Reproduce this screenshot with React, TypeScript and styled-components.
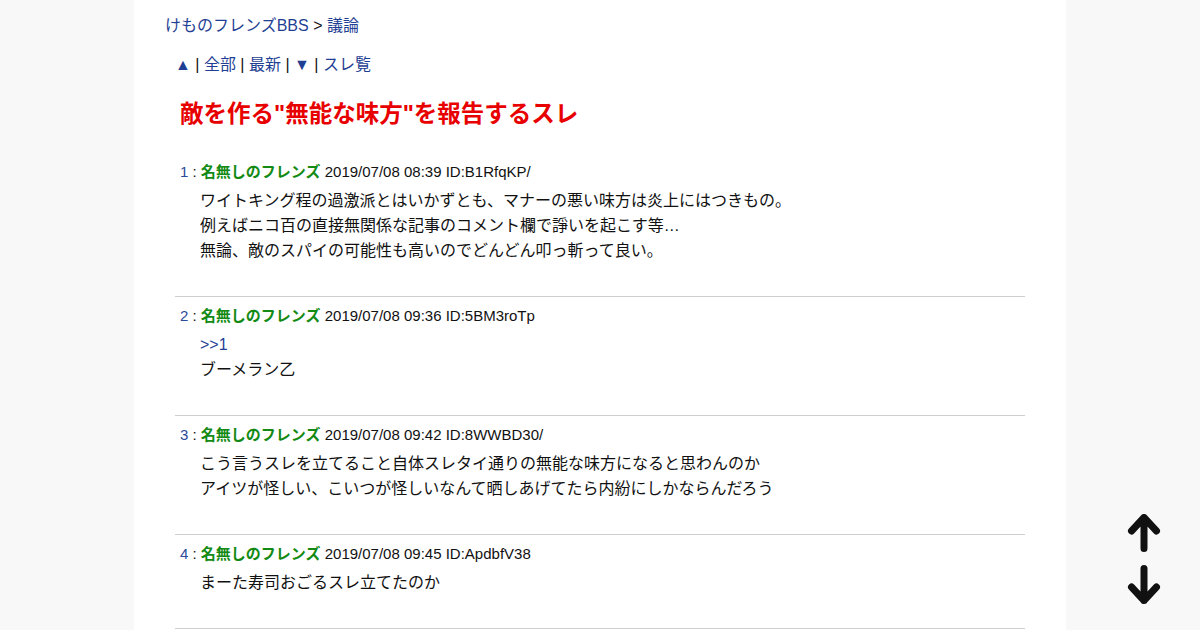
import React from "react";
import styled, { createGlobalStyle } from "styled-components";

const Global = createGlobalStyle`
  html, body { margin: 0; padding: 0; background: #f8f8f8; }
  body { font-family: "Liberation Sans", Arial, "Noto Sans CJK JP", sans-serif; color: #111; }
`;

const Page = styled.div`
  width: 932px;
  margin: 0 auto;
  background: #fff;
  min-height: 630px;
  padding: 16px 31px 0;
  box-sizing: border-box;
`;

const Breadcrumb = styled.div`
  font-size: 16px;
  line-height: 20px;
`;

const Link = styled.a`
  color: #1f3f94;
  text-decoration: none;
`;

const Nav = styled.div`
  margin: 19px 0 0 10px;
  font-size: 16px;
  line-height: 20px;
`;

const Title = styled.h1`
  margin: 23px 0 0 15px;
  font-size: 23.5px;
  line-height: 32px;
  font-weight: bold;
  color: #e80000;
`;

const List = styled.div`
  margin: 23px 10px 0;
`;

const Post = styled.div<{ $first?: boolean }>`
  padding: 9px 0 33px;
  border-top: ${(p) => (p.$first ? "none" : "1px solid #cfcfcf")};
`;

const Head = styled.div`
  padding-left: 5px;
  font-size: 15px;
  line-height: 20px;
`;

const Num = styled.span`
  color: #2a4a9a;
`;

const Name = styled.span`
  color: #138a13;
  font-weight: bold;
`;

const Body = styled.div`
  margin-top: 6px;
  padding-left: 25px;
  font-size: 16px;
  line-height: 25px;
`;

const Scroll = styled.div`
  position: fixed;
  left: 1125px;
  top: 514px;
  display: flex;
  flex-direction: column;
  gap: 10px;
`;

const Arrow = ({ down }: { down?: boolean }) => (
  <svg width="38" height="40" viewBox="0 0 38 40" fill="none" stroke="#111" strokeWidth="7" strokeLinecap="round" strokeLinejoin="round">
    {down ? (
      <path d="M19 4.5 V36.5 M6.5 23 L19 36.5 L31.5 23" />
    ) : (
      <path d="M19 34.5 V3.5 M6.5 17 L19 3.5 L31.5 17" />
    )}
  </svg>
);

const posts = [
  {
    n: 1,
    date: "2019/07/08 08:39 ID:B1RfqKP/",
    anchor: null as string | null,
    lines: [
      "ワイトキング程の過激派とはいかずとも、マナーの悪い味方は炎上にはつきもの。",
      "例えばニコ百の直接無関係な記事のコメント欄で諍いを起こす等…",
      "無論、敵のスパイの可能性も高いのでどんどん叩っ斬って良い。",
    ],
  },
  {
    n: 2,
    date: "2019/07/08 09:36 ID:5BM3roTp",
    anchor: ">>1",
    lines: ["ブーメラン乙"],
  },
  {
    n: 3,
    date: "2019/07/08 09:42 ID:8WWBD30/",
    anchor: null,
    lines: [
      "こう言うスレを立てること自体スレタイ通りの無能な味方になると思わんのか",
      "アイツが怪しい、こいつが怪しいなんて晒しあげてたら内紛にしかならんだろう",
    ],
  },
  {
    n: 4,
    date: "2019/07/08 09:45 ID:ApdbfV38",
    anchor: null,
    lines: ["まーた寿司おごるスレ立てたのか"],
  },
];

export default function App() {
  return (
    <>
      <Global />
      <Page>
        <Breadcrumb>
          <Link href="#">けものフレンズBBS</Link> &gt; <Link href="#">議論</Link>
        </Breadcrumb>
        <Nav>
          <Link href="#">▲</Link> | <Link href="#">全部</Link> | <Link href="#">最新</Link> |{" "}
          <Link href="#">▼</Link> | <Link href="#">スレ覧</Link>
        </Nav>
        <Title>敵を作る"無能な味方"を報告するスレ</Title>
        <List>
          {posts.map((p, i) => (
            <Post key={p.n} $first={i === 0}>
              <Head>
                <Num>{p.n}</Num> : <Name>名無しのフレンズ</Name> {p.date}
              </Head>
              <Body>
                {p.anchor && (
                  <div>
                    <Link href="#">{p.anchor}</Link>
                  </div>
                )}
                {p.lines.map((l) => (
                  <div key={l}>{l}</div>
                ))}
              </Body>
            </Post>
          ))}
          <Post />
        </List>
      </Page>
      <Scroll>
        <Arrow />
        <Arrow down />
      </Scroll>
    </>
  );
}
